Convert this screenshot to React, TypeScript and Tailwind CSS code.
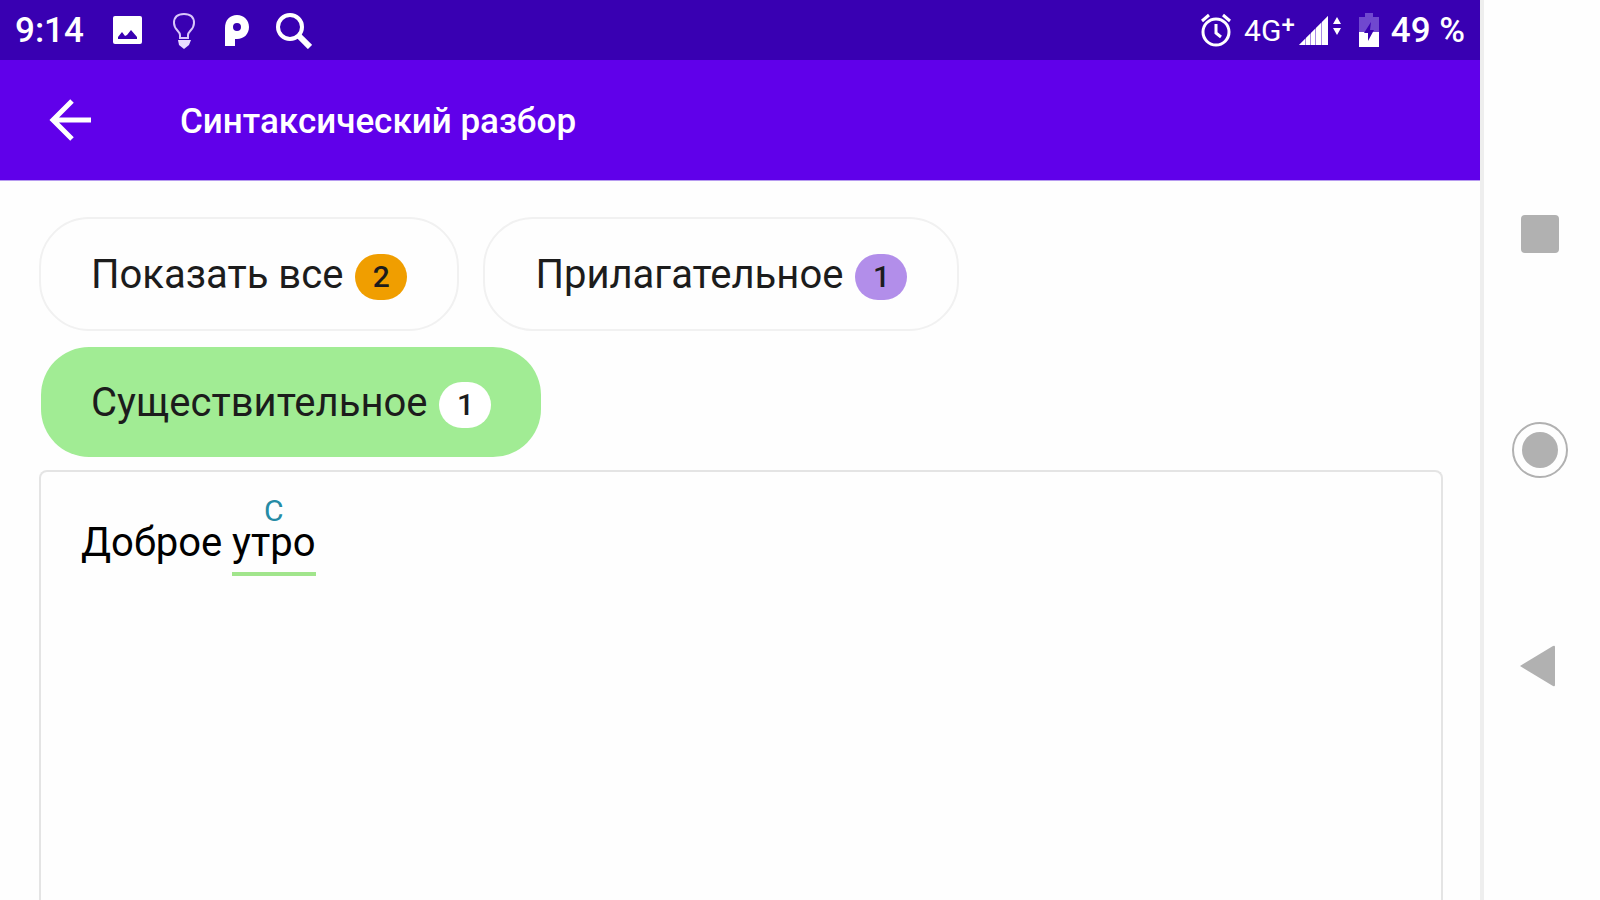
import React, { useState } from 'react';

const wordTypes = [
  { id: 'all', label: 'Показать все', count: 2, badge: 'bg-[#f09e00]' },
  { id: 'adjective', label: 'Прилагательное', count: 1, badge: 'bg-[#b28eea]' },
  { id: 'noun', label: 'Существительное', count: 1, badge: 'bg-white' },
];

const ImageIcon = () => (
  <svg className="w-8 h-8" viewBox="0 0 32 32" aria-hidden="true">
    <rect x="2" y="1" width="29" height="28" rx="2" fill="#fff" />
    <path d="M7 24v-2l4-5 3 4 2-1 4-5 6 7v2z" fill="#3900b2" />
  </svg>
);

const BulbIcon = () => (
  <svg className="w-7 h-9" viewBox="0 0 28 36" fill="none" stroke="#d9c6fb" strokeWidth="2" aria-hidden="true">
    <path d="M10 25v-3c0-4-6-5-6-12C4 4 8 1 14 1s10 3 10 9c0 7-6 8-6 12v3z" />
    <path d="M8 27h13l-2 5-5 4-5-4z" fill="#e9dcff" stroke="none" />
  </svg>
);

const ParkingIcon = () => (
  <svg className="w-6 h-8" viewBox="2 0 24 32" aria-hidden="true">
    <path
      d="M2 31V13C2 5 7 0 14 0s12 5 12 12-5 12-12 12h-2v7zM14 8a4 4 0 1 0 0 8 4 4 0 0 0 0-8z"
      fill="#fff"
      fillRule="evenodd"
    />
  </svg>
);

const SearchIcon = () => (
  <svg className="w-9 h-9" viewBox="0 0 36 36" fill="none" stroke="#fff" aria-hidden="true">
    <circle cx="14" cy="14" r="12" strokeWidth="4" />
    <path d="M22 22l12 12" strokeWidth="6" />
  </svg>
);

const AlarmIcon = () => (
  <svg className="w-8 h-9" viewBox="0 0 32 36" fill="none" stroke="#fff" aria-hidden="true">
    <circle cx="16" cy="19" r="13" strokeWidth="3" />
    <path d="M16 11v9l5 4M2 8l7-6M30 8l-7-6" strokeWidth="3" />
  </svg>
);

const SignalIcon = () => (
  <svg className="w-11 h-8" viewBox="0 0 44 32" fill="#fff" aria-hidden="true">
    <path d="M0 30L29 1v29z" fill="#a98ae6" />
    <path d="M0 30l6-6v6zM7 23l4-4v11H7zM12 18l4-4v16h-4zM17 13l5-5v22h-5zM23 7l6-6v29h-6z" />
    <path d="M34 9l4-7 4 7zM34 13h8l-4 7z" />
  </svg>
);

const BatteryIcon = () => (
  <svg className="w-5 h-9" viewBox="0 0 20 36" aria-hidden="true">
    <path d="M0 19V4h6V0h8v4h6v15z" fill="#7048cf" />
    <path d="M0 19h20v15H0z" fill="#fff" />
    <path d="M12 9L5 20h4v8l6-11h-4z" fill="#3900b2" />
  </svg>
);

const BackIcon = () => (
  <svg className="w-11 h-11" viewBox="0 0 44 44" fill="none" stroke="#fff" strokeWidth="5" aria-hidden="true">
    <path d="M24 3L5 22l19 19M5 22h38" />
  </svg>
);

const StatusBar = () => (
  <div className="h-15 px-[15px] pt-0.5 flex items-center justify-between bg-[#3900b2] text-white text-[35px] leading-10 font-medium">
    <div className="flex items-center gap-[27px]">
      <span>9:14</span>
      <ImageIcon />
      <BulbIcon />
      <ParkingIcon />
      <SearchIcon />
    </div>
    <div className="flex items-center">
      <AlarmIcon />
      <span className="ml-3 flex items-start text-[30px] leading-10 font-normal">
        4G<span className="text-2xl leading-7 font-medium">+</span>
      </span>
      <span className="ml-1 flex"><SignalIcon /></span>
      <span className="ml-4 mr-3 flex"><BatteryIcon /></span>
      <span>49 %</span>
    </div>
  </div>
);

const NavigationBar = () => (
  <nav className="w-[120px] shrink-0 pr-1 flex flex-col items-center justify-center gap-40 border-l-4 border-[#eeeeee] bg-[#fefefe]">
    <button className="w-14 h-14 flex items-center justify-center" aria-label="Недавние приложения">
      <span className="w-[38px] h-[38px] rounded-sm bg-[#b1b1b1]" />
    </button>
    <button className="w-14 h-14 flex items-center justify-center rounded-full border-2 border-[#b1b1b1]" aria-label="Домой">
      <span className="w-9 h-9 rounded-full bg-[#b1b1b1]" />
    </button>
    <button className="w-14 h-14 flex items-center justify-center" aria-label="Назад">
      <svg className="w-10 h-11" viewBox="0 0 40 44" aria-hidden="true">
        <path d="M0 22L33 2q2-1 2 1v38q0 2-2 1z" fill="#b1b1b1" />
      </svg>
    </button>
  </nav>
);

const App: React.FC = () => {
  const [selected, setSelected] = useState('noun');

  return (
    <div className="min-h-screen flex bg-[#fefefe] font-['Roboto',sans-serif] text-[#1c1c1c]">
      <div className="flex-1 flex flex-col">
        <StatusBar />
        {/* Encabezado */}
        <header className="h-[121px] pl-12 flex items-center gap-[88px] border-b border-[#b79bf0] bg-[#6000ea] text-white">
          <button aria-label="Назад"><BackIcon /></button>
          <h1 className="pt-1 text-[35px] leading-10 font-medium">Синтаксический разбор</h1>
        </header>
        <main className="flex-1 flex flex-col pt-9 pl-[39px] pr-[37px]">
          <div className="flex flex-wrap gap-x-6 gap-y-3.5">
            {wordTypes.map(type => (
              <button
                key={type.id}
                onClick={() => setSelected(type.id)}
                aria-pressed={selected === type.id}
                className={`h-[114px] px-[50px] pt-0.5 flex items-center gap-3 rounded-[50px] border-2 text-[40px] leading-12 ${selected === type.id ? 'border-transparent bg-[#a1ec94] bg-clip-padding' : 'border-[#f1f1f1] bg-[#fefefe]'}`}
              >
                {type.label}
                <span className={`w-[52px] h-[46px] mt-1 flex items-center justify-center rounded-full text-[30px] leading-8 font-medium ${type.badge}`}>
                  {type.count}
                </span>
              </button>
            ))}
          </div>
          {/* Texto analizado */}
          <section className="flex-1 mt-[11px] pt-[47px] px-10 rounded-t-lg border-2 border-b-0 border-[#e4e4e4] text-[40px] leading-12 text-black">
            <p>
              Доброе{' '}
              <span className="relative inline-block h-[57px] border-b-4 border-[#a1e58c]">
                <span className="absolute -top-6 inset-x-0 text-center text-[30px] leading-8 text-[#258ba5]">С</span>
                утро
              </span>
            </p>
          </section>
        </main>
      </div>
      <NavigationBar />
    </div>
  );
};

export default App;
